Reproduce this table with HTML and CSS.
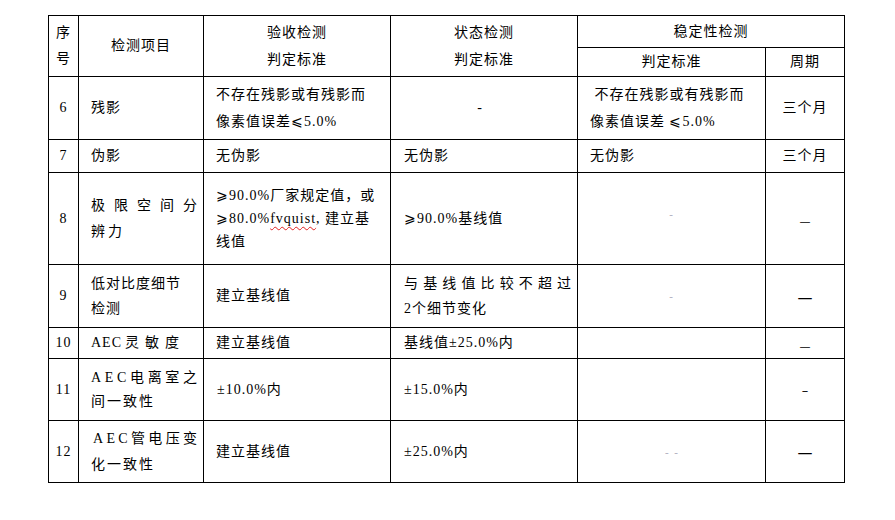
FILE: index.html
```html
<!DOCTYPE html>
<html lang="zh-CN">
<head>
<meta charset="utf-8">
<title>检测项目</title>
<link rel="stylesheet" href="styles.css">
</head>
<body>
<div class="page">
<table class="spec">
  <colgroup>
    <col class="w1"><col class="w2"><col class="w3"><col class="w4"><col class="w5"><col class="w6">
  </colgroup>
  <thead>
    <tr class="h1">
      <th rowspan="2" class="c">序<br>号</th>
      <th rowspan="2" class="c">检测项目</th>
      <th rowspan="2" class="c lh27">验收检测<br>判定标准</th>
      <th rowspan="2" class="c lh27">状态检测<br>判定标准</th>
      <th colspan="2" class="c">稳定性检测</th>
    </tr>
    <tr class="h2">
      <th class="c">判定标准</th>
      <th class="c">周期</th>
    </tr>
  </thead>
  <tbody>
    <tr class="r6">
      <td class="c">6</td>
      <td>残影</td>
      <td class="lh27">不存在残影或有残影而<br>像素值误差⩽5.0%</td>
      <td class="c"><span class="left">-</span></td>
      <td class="lh27">&nbsp;不存在残影或有残影而<br>像素值误差 ⩽5.0%</td>
      <td class="c">三个月</td>
    </tr>
    <tr class="r7">
      <td class="c">7</td>
      <td>伪影</td>
      <td>无伪影</td>
      <td class="s">无伪影</td>
      <td>无伪影</td>
      <td class="c">三个月</td>
    </tr>
    <tr class="r8">
      <td class="c">8</td>
      <td><span class="dist"><span>极</span><span>限</span><span>空</span><span>间</span><span>分</span></span><span class="ls3">辨力</span></td>
      <td class="lh23">⩾90.0%厂家规定值，或<br>⩾80.0%<span class="spell">fvquist</span>, 建立基<br>线值</td>
      <td class="s">⩾90.0%基线值</td>
      <td class="c"><span class="faint up">-</span></td>
      <td class="c"><span class="dash d11">—</span></td>
    </tr>
    <tr class="r9">
      <td class="c">9</td>
      <td class="lh25">低对比度细节<br>检测</td>
      <td>建立基线值</td>
      <td class="s lh25"><span class="dist"><span>与</span><span>基</span><span>线</span><span>值</span><span>比</span><span>较</span><span>不</span><span>超</span><span>过</span></span>2个细节变化</td>
      <td class="c"><span class="faint">-</span></td>
      <td class="c"><span class="dash d16">—</span></td>
    </tr>
    <tr class="r10">
      <td class="c">10</td>
      <td>AEC<span class="ls6 gap">灵敏度</span></td>
      <td>建立基线值</td>
      <td class="s">基线值±25.0%内</td>
      <td></td>
      <td class="c"><span class="dash d11">—</span></td>
    </tr>
    <tr class="r11">
      <td class="c">11</td>
      <td class="lh24"><span class="dist"><span>A</span><span>E</span><span>C</span><span>电</span><span>离</span><span>室</span><span>之</span></span><span class="ls2">间一致性</span></td>
      <td class="s">±10.0%内</td>
      <td class="s">±15.0%内</td>
      <td></td>
      <td class="c"><span class="dash d7">–</span></td>
    </tr>
    <tr class="r12">
      <td class="c">12</td>
      <td class="lh26"><span class="dist shift"><span>A</span><span>E</span><span>C</span><span>管</span><span>电</span><span>压</span><span>变</span></span><span class="ls2">化一致性</span></td>
      <td>建立基线值</td>
      <td class="s">±25.0%内</td>
      <td class="c"><span class="faint sm">-&nbsp;&nbsp;-</span></td>
      <td class="c"><span class="dash d16">—</span></td>
    </tr>
  </tbody>
</table>
</div>
</body>
</html>
```
FILE: styles.css
```css
html, body {
  margin: 0;
  background: #ffffff;
}

body {
  color: #000000;
  font-family: "Liberation Serif", "Noto Sans CJK SC", serif;
  font-size: 14px;
  letter-spacing: 1px;
}

.page {
  padding: 15px 0 0 48px;
}

.spec {
  border-collapse: collapse;
  table-layout: fixed;
  width: 797px;
}

.spec th,
.spec td {
  border: 1px solid #000000;
  padding: 0 6px 0 12px;
  vertical-align: middle;
  text-align: left;
  font-weight: normal;
  line-height: 26px;
  white-space: nowrap;
  overflow: hidden;
}

.spec .c {
  text-align: center;
  padding: 0;
}

.spec .s {
  padding-left: 13px;
}

.w1 { width: 30px; }
.w2 { width: 125px; }
.w3 { width: 187px; }
.w4 { width: 187px; }
.w5 { width: 188px; }
.w6 { width: 79px; }

.h1 { height: 32px; }
.h2 { height: 29px; }
.r6 { height: 63px; }
.r7 { height: 33px; }
.r8 { height: 92px; }
.r9 { height: 63px; }
.r10 { height: 31px; }
.r11 { height: 62px; }
.r12 { height: 62px; }

.spec .lh23 { line-height: 23px; }
.spec .lh24 { line-height: 24px; }
.spec .lh25 { line-height: 25px; }
.spec .lh26 { line-height: 26px; }
.spec .lh27 { line-height: 27px; }

.dist {
  display: flex;
  justify-content: space-between;
  letter-spacing: 0;
}

.dist.shift {
  padding-left: 2px;
}

.ls2 { letter-spacing: 2px; }
.ls3 { letter-spacing: 3px; }
.ls6 { letter-spacing: 6px; }
.gap { margin-left: 3px; }

.left {
  margin-right: 8px;
}

.spell {
  text-decoration: underline wavy #e02020;
  text-decoration-thickness: 1px;
  text-underline-offset: 3px;
}

.faint {
  color: #a8a8b8;
  font-size: 11px;
}

.faint.up {
  position: relative;
  top: -5px;
}

.faint.sm {
  letter-spacing: 0;
}

.dash {
  font-family: "DejaVu Sans", sans-serif;
  letter-spacing: 0;
  position: relative;
}

.d11 { font-size: 11px; top: 3px; }
.d16 { font-size: 15px; top: 2px; }
.d7 { font-size: 13px; top: 1px; }
```
